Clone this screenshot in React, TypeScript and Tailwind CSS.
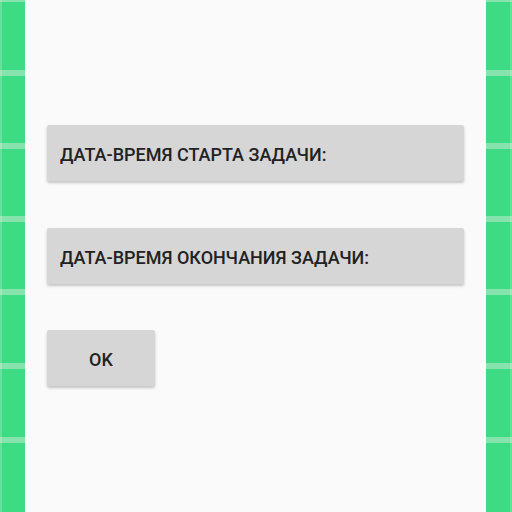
import React from "react";

const segs: [number, boolean][] = [
  [2, true],
  [68, false],
  [6, true],
  [67, false],
  [6, true],
  [67, false],
  [6, true],
  [67, false],
  [6, true],
  [68, false],
  [6, true],
  [68, false],
  [6, true],
  [69, false],
];

function Strip({ side }: { side: "left" | "right" }) {
  return (
    <div className="relative flex h-full w-[26px] flex-col">
      {segs.map(([h, light], i) => (
        <div
          key={i}
          className={light ? "shrink-0 bg-[#86e3ac]" : "shrink-0 bg-[#3ddb84]"}
          style={{ height: h }}
        />
      ))}
      <div
        className={
          side === "left"
            ? "absolute left-0 top-0 h-full w-[2px] bg-white/20"
            : "absolute right-0 top-0 h-full w-[2px] bg-white/20"
        }
      />
    </div>
  );
}

function Btn({ label, className }: { label: string; className: string }) {
  return (
    <div
      className={
        "flex items-center rounded-[2px] bg-[#d6d6d6] pt-[2px] text-[18px] font-medium uppercase text-[#222] shadow-[0_2px_3px_rgba(0,0,0,0.22)] " +
        className
      }
    >
      {label}
    </div>
  );
}

export default function App() {
  return (
    <div
      className="flex h-[512px] w-[512px] overflow-hidden bg-[#fafafa]"
      style={{ fontFamily: "Roboto, 'Noto Sans', sans-serif" }}
    >
      <div className="w-[25px] shrink-0 overflow-hidden">
        <Strip side="left" />
      </div>
      <div className="flex flex-1 flex-col px-[22px] pt-[125px]">
        <Btn label="Дата-время старта задачи:" className="h-[56px] pl-[13px]" />
        <Btn label="Дата-время окончания задачи:" className="mt-[47px] h-[56px] pl-[13px]" />
        <Btn label="OK" className="mt-[46px] h-[56px] w-[108px] justify-center" />
      </div>
      <div className="w-[26px] shrink-0 overflow-hidden">
        <Strip side="right" />
      </div>
    </div>
  );
}
